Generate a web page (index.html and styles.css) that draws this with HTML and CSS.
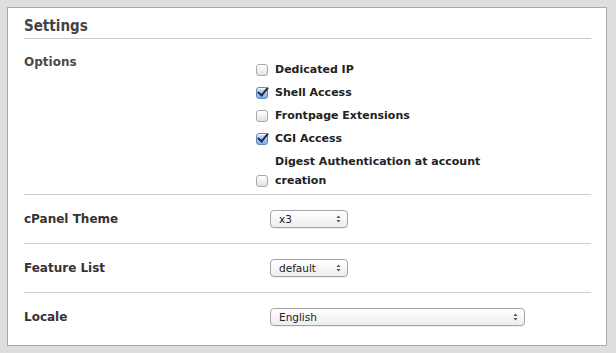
FILE: index.html
```html
<!DOCTYPE html>
<html lang="en">
<head>
  <meta charset="UTF-8" />
  <meta name="viewport" content="width=device-width, initial-scale=1.0" />
  <title>Settings</title>
  <link rel="stylesheet" href="styles.css">
</head>
<body>
  <div class="panel">
    <h2 class="panel-title">Settings</h2>

    <div class="row row-options">
      <div class="row-label">Options</div>
      <ul class="option-list">
        <li><input type="checkbox" id="opt-ip"><label for="opt-ip">Dedicated IP</label></li>
        <li><input type="checkbox" id="opt-shell" checked><label for="opt-shell">Shell Access</label></li>
        <li><input type="checkbox" id="opt-fp"><label for="opt-fp">Frontpage Extensions</label></li>
        <li><input type="checkbox" id="opt-cgi" checked><label for="opt-cgi">CGI Access</label></li>
        <li><input type="checkbox" id="opt-digest"><label for="opt-digest">Digest Authentication at account creation</label></li>
      </ul>
    </div>

    <div class="row">
      <div class="row-label">cPanel Theme</div>
      <div class="row-field">
        <span class="select select-short">
          <select><option>x3</option></select>
          <svg width="5" height="8" viewBox="0 0 5 8"><path d="M2.5 0.5L4.5 3H0.5z M2.5 7.5L4.5 5H0.5z" fill="#555"/></svg>
        </span>
      </div>
    </div>

    <div class="row">
      <div class="row-label">Feature List</div>
      <div class="row-field">
        <span class="select select-short">
          <select><option>default</option></select>
          <svg width="5" height="8" viewBox="0 0 5 8"><path d="M2.5 0.5L4.5 3H0.5z M2.5 7.5L4.5 5H0.5z" fill="#555"/></svg>
        </span>
      </div>
    </div>

    <div class="row row-last">
      <div class="row-label">Locale</div>
      <div class="row-field">
        <span class="select select-long">
          <select><option>English</option></select>
          <svg width="5" height="8" viewBox="0 0 5 8"><path d="M2.5 0.5L4.5 3H0.5z M2.5 7.5L4.5 5H0.5z" fill="#555"/></svg>
        </span>
      </div>
    </div>
  </div>
</body>
</html>
```

FILE: styles.css
```css
body {
  margin: 0;
  background: #dedede;
  font-family: "DejaVu Sans", Verdana, sans-serif;
  color: #222;
}

.panel {
  box-sizing: border-box;
  width: 600px;
  margin: 7px 0 0 7px;
  padding: 8px 15px 4px 16px;
  background: #fff;
  border: 1px solid #a9a9a9;
}

.panel-title {
  margin: 0;
  padding-bottom: 2px;
  font-family: "DejaVu Sans Condensed", "DejaVu Sans", sans-serif;
  font-size: 15px;
  font-weight: bold;
  line-height: 20px;
  color: #444;
  border-bottom: 1px solid #c8c8c8;
}

.row {
  display: grid;
  grid-template-columns: 232px 1fr;
  padding: 15px 0;
  border-bottom: 1px solid #cdcdcd;
}

.row-last {
  border-bottom: none;
}

.row-options {
  padding: 14px 0 2px;
}

.row-label {
  font-size: 12px;
  font-weight: bold;
  line-height: 18px;
  color: #333;
}

.row-options .row-label {
  color: #4a4a4a;
}

.option-list {
  list-style: none;
  margin: 0;
  padding: 5px 0 0;
}

.option-list li {
  display: flex;
  align-items: flex-end;
  padding: 2px 0;
}

.option-list label {
  max-width: 215px;
  font-size: 11px;
  font-weight: bold;
  line-height: 19px;
  color: #222;
}

.option-list input {
  -webkit-appearance: none;
  appearance: none;
  position: relative;
  box-sizing: border-box;
  flex: none;
  width: 12px;
  height: 12px;
  margin: 0 7px 3px 0;
  border: 1px solid #a8a8a8;
  border-radius: 3px;
  background: linear-gradient(#ffffff, #e2e2e2);
  box-shadow: inset 0 1px 0 #fff;
}

.option-list input:checked {
  border-color: #6286b5;
  background: linear-gradient(#d2e4f8, #80ade3);
}

.option-list input:checked::after {
  content: '';
  position: absolute;
  left: 3px;
  top: -3px;
  width: 4px;
  height: 9px;
  border-right: 2px solid #1c2f52;
  border-bottom: 2px solid #1c2f52;
  transform: rotate(40deg);
}

.row-field {
  display: flex;
  align-items: center;
}

.select {
  position: relative;
  display: flex;
  margin-left: 14px;
}

.select select {
  -webkit-appearance: none;
  appearance: none;
  box-sizing: border-box;
  height: 18px;
  margin: 0;
  padding: 0 16px 0 8px;
  font-family: "DejaVu Sans", Verdana, sans-serif;
  font-size: 10.5px;
  color: #222;
  border: 1px solid #a4a4a4;
  border-radius: 4px;
  background: linear-gradient(#ffffff, #ededed);
  box-shadow: 0 1px 0 rgba(0, 0, 0, 0.06);
}

.select svg {
  position: absolute;
  right: 7px;
  top: 5px;
}

.select-short select {
  width: 78px;
}

.select-long select {
  width: 255px;
}
```
